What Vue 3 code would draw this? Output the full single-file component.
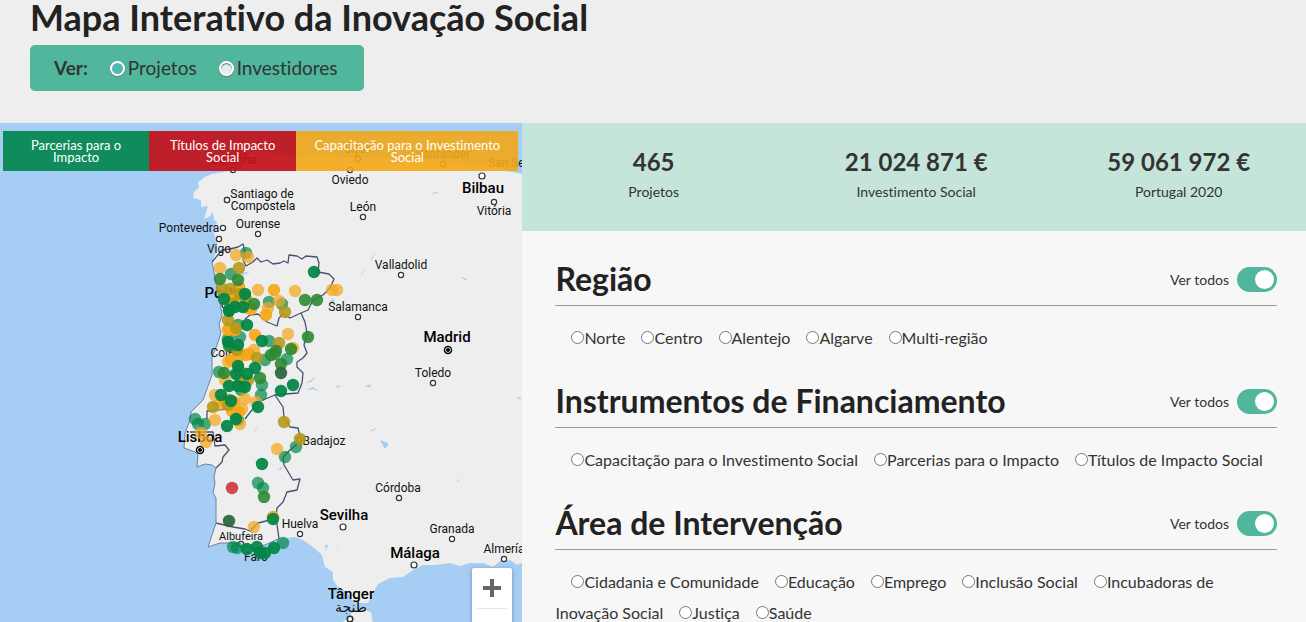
<script setup>
import { ref } from 'vue'

const view = ref('projetos')

const legend = [
  { label: 'Parcerias para o Impacto', tone: 'green' },
  { label: 'Títulos de Impacto Social', tone: 'red' },
  { label: 'Capacitação para o Investimento Social', tone: 'amber' },
]

const stats = [
  { value: '465', label: 'Projetos' },
  { value: '21\u00a0024\u00a0871\u00a0€', label: 'Investimento Social' },
  { value: '59\u00a0061\u00a0972\u00a0€', label: 'Portugal 2020' },
]

const filters = ref([
  { id: 'regiao', title: 'Região', all: true, options: ['Norte', 'Centro', 'Alentejo', 'Algarve', 'Multi-região'] },
  {
    id: 'instrumentos',
    title: 'Instrumentos de Financiamento',
    all: true,
    options: ['Capacitação para o Investimento Social', 'Parcerias para o Impacto', 'Títulos de Impacto Social'],
  },
  {
    id: 'area',
    title: 'Área de Intervenção',
    all: true,
    options: ['Cidadania e Comunidade', 'Educação', 'Emprego', 'Inclusão Social', 'Incubadoras de Inovação Social', 'Justiça', 'Saúde'],
  },
])

// [name, text x, text baseline, ring x, ring y, size class]
const places = [
  ['Corunha', 234, 164, 233, 170, ''],
  ['Gijón', 358, 153, 358, 159, ''],
  ['Santander', 443, 158, 443, 164, ''],
  ['San Sebastián', 526, 167, 560, 170, ''],
  ['Oviedo', 350, 184, 350, 170, ''],
  ['Bilbau', 483, 193, 482, 176, 'city'],
  ['Vitória', 494, 215, 494, 202, ''],
  ['León', 363, 211, 363, 217, ''],
  ['Santiago de', 262, 198, 227, 200, ''],
  ['Compostela', 263, 210, 227, 200, ''],
  ['Pontevedra', 189, 232, 223, 228, ''],
  ['Ourense', 258, 228, 258, 234, ''],
  ['Vigo', 219, 253, 219, 239, ''],
  ['Valladolid', 401, 269, 401, 275, ''],
  ['Salamanca', 358, 311, 358, 317, ''],
  ['Toledo', 433, 377, 433, 383, ''],
  ['Badajoz', 324, 445, 299, 440, ''],
  ['Coimbra', 233, 357, 232, 350, ''],
  ['Córdoba', 398, 492, 399, 498, ''],
  ['Sevilha', 344, 520, 343, 527, 'city'],
  ['Huelva', 300, 528, 300, 534, ''],
  ['Granada', 452, 533, 452, 539, ''],
  ['Málaga', 415, 558, 414, 565, 'city'],
  ['Almería', 504, 553, 504, 559, ''],
  ['Albufeira', 241, 540, 241, 544, 'small'],
  ['Faro', 256, 561, 257, 550, ''],
  ['Tânger', 351, 599, 350, 619, 'city'],
  ['طنجة', 351, 612, 350, 619, 'arabic'],
  ['Porto', 223, 298, 225, 305, 'city'],
]

const markers = {
  t: [[246,253],[231,274],[269,302],[282,304],[240,337],[228,339],[269,341],[265,360],[275,354],[287,359],[219,372],[262,385],[261,395],[241,390],[195,419],[198,424],[205,424],[296,447],[285,457],[258,483],[263,488],[233,547],[237,548],[283,543],[238,325],[238,420]],
  y: [[236,255],[248,257],[220,268],[258,290],[295,291],[279,301],[332,290],[337,290],[288,334],[254,350],[228,362],[225,380],[215,395],[219,405],[245,399],[256,402],[215,420],[240,424],[277,449],[254,527],[229,329],[242,409],[268,308],[293,348],[201,433],[206,442]],
  o: [[239,287],[226,295],[235,297],[243,295],[251,309],[274,290],[266,315],[248,308],[235,330],[228,330],[255,335],[249,354],[231,360],[238,358],[246,355],[224,401],[234,402],[232,411],[239,412],[273,517]],
  l: [[239,268],[222,289],[230,289],[240,294],[285,312],[228,320],[279,343],[257,358],[239,370],[248,380],[213,407],[228,405],[284,422],[300,439],[237,350],[240,379],[230,400],[246,299],[233,304],[236,328]],
  m: [[220,279],[238,280],[254,304],[305,300],[317,300],[308,337],[276,351],[271,355],[281,364],[260,378],[224,373],[264,497],[229,346],[291,349]],
  g: [[314,272],[224,299],[243,307],[235,307],[229,310],[245,294],[229,311],[247,325],[228,342],[238,345],[262,341],[238,366],[255,368],[236,374],[247,374],[229,386],[238,386],[245,387],[221,395],[293,385],[281,391],[258,407],[231,401],[227,426],[236,419],[262,464],[273,519],[247,549],[257,547],[260,553],[265,553],[274,548]],
  d: [[281,373],[229,521]],
  r: [[232,488]],
}

const zoomIn = () => {}
</script>

<template>
  <main class="page">
    <header class="top">
      <h1>Mapa Interativo da Inovação Social</h1>
      <fieldset class="switcher" aria-label="Ver">
        <strong>Ver:</strong>
        <label><input v-model="view" type="radio" name="view" value="projetos" />Projetos</label>
        <label><input v-model="view" type="radio" name="view" value="investidores" />Investidores</label>
      </fieldset>
    </header>

    <div class="body">
      <section class="map" aria-label="Mapa">
        <svg class="chart" role="img" aria-label="Projetos em Portugal">
          <g transform="translate(0 -123)">
            <path class="land" d="M212 174 205 177 198 182 199 187 194 192 193 198 201 200 201 207 208 206 204 219 209 217 213 212 214 220 217 222 214 233 217 242 216 252 212 262 214 272 217 288 220 302 222 315 219 325 221 333 217 345 212 357 212 375 203 400 191 412 190 420 185 433 184 448 195 452 198 455 197 467 205 464 212 465 216 468 214 477 215 483 213 493 216 498 216 523 212 535 208 547 220 543 233 543 242 544 255 548 265 545 278 539 295 537 303 540 313 547 322 555 325 567 333 572 333 580 338 587 347 592 352 600 360 603 368 603 373 593 378 584 390 578 403 577 413 570 423 565 436 565 450 563 460 566 470 563 483 563 493 567 500 561 510 560 517 565 530 560 700 560V174L522 174 507 171 495 163 470 166 440 160 400 160 370 157 340 158 320 153 300 158 280 154 255 151 242 157 242 169 230 171Z" />
            <path class="land" d="M343 622 352 613 360 609 371 612 374 630 343 650Z" />
            <path class="lake" d="M430 194 436 192 439 193 432 194ZM370 260 377 251 372 259ZM360 276 366 268 364 272ZM460 277 468 279 465 280ZM329 303 333 298 335 303ZM306 383 316 377 311 382ZM306 390 313 387 319 391 313 389ZM335 387 341 385 338 388ZM364 387 371 384 370 387ZM370 431 377 427 373 431ZM380 440 386 442 389 444 385 449ZM517 398 520 397 521 400ZM457 481 460 478 458 482ZM325 545 328 545 326 551ZM336 551 339 545 337 550ZM253 433 258 426 256 430ZM302 427 305 419 303 425ZM278 470 283 466 281 470ZM240 273 250 272 243 275Z" />
            <path class="border" d="M212 262 222 250 230 249 238 247 243 244 245 252 243 260 246 266 253 262 257 258 261 262 267 260 273 264 280 263 284 261 288 263 289 255 297 256 302 259 306 256 317 257 319 263 318 272 329 274 334 279 330 288 323 295 313 300 308 310 301 313 305 322 307 333 304 345 307 353 303 358 297 362 297 367 303 373 302 383 298 393 285 394 275 395 283 407 284 417 290 427 298 428 300 436 298 443 290 450 283 457 284 465 293 480 300 479 297 490 287 492 283 502 277 508 276 517 279 539" />
            <path class="border" d="M245 319 250 315 258 314 267 322 277 326 279 318 283 314 290 318 301 313M275 395 258 402 245 419M207 419 207 411 227 409M190 432 213 432 215 446 225 445 229 450 223 457 222 462 216 468M216 523 233 527 245 529 250 531 258 523 270 520 276 513" />
            <path class="coast" d="M212 262 214 272 217 288 220 302 222 315 219 325 221 333 217 345 212 357 212 375 203 400 191 412 190 420 185 433 184 448 195 452 198 455 197 467 205 464 212 465 216 468 214 477 215 483 213 493 216 498 216 523 212 535 208 547 220 543 233 543 242 544 255 548 265 545 278 539" />

            <g v-for="p in places" :key="p[0]">
              <circle class="ring" :cx="p[3]" :cy="p[4]" :r="p[5] === 'city' ? 3 : 2.6" />
              <text :class="['place', p[5]]" :x="p[1]" :y="p[2]">{{ p[0] }}</text>
            </g>
            <text class="place city" x="447" y="342">Madrid</text>
            <text class="place city" x="200" y="442">Lisboa</text>
            <g v-for="c in [[448, 350], [200, 450]]" :key="c[0]">
              <circle class="ring capital" :cx="c[0]" :cy="c[1]" r="3.5" />
              <circle class="core" :cx="c[0]" :cy="c[1]" r="2" />
            </g>

            <g v-for="(list, tone) in markers" :key="tone" :class="['dots', tone]">
              <circle v-for="(m, i) in list" :key="i" :cx="m[0]" :cy="m[1]" r="6.2" />
            </g>
          </g>
        </svg>

        <ul class="legend">
          <li v-for="l in legend" :key="l.tone" :class="l.tone">{{ l.label }}</li>
        </ul>

        <div class="zoom">
          <button type="button" aria-label="Aumentar zoom" @click="zoomIn">
            <svg width="18" height="18" viewBox="0 0 18 18" aria-hidden="true"><path d="M7 0h4v7h7v4h-7v7H7v-7H0V7h7z" /></svg>
          </button>
        </div>
      </section>

      <section class="panel">
        <dl class="stats">
          <div v-for="s in stats" :key="s.label">
            <dt>{{ s.label }}</dt>
            <dd>{{ s.value }}</dd>
          </div>
        </dl>

        <form class="filters">
          <section v-for="f in filters" :key="f.id" class="filter">
            <div class="head">
              <h2>{{ f.title }}</h2>
              <label class="toggle">Ver todos<input v-model="f.all" type="checkbox" /></label>
            </div>
            <div class="options">
              <template v-for="o in f.options" :key="o"><label><input type="radio" :name="f.id" :value="o" />{{ o }}</label><wbr /></template>
            </div>
          </section>
        </form>
      </section>
    </div>
  </main>
</template>

<style>
body {
  margin: 0;
  background: #eee;
}
</style>

<style scoped>
.page {
  display: flex;
  flex-direction: column;
  height: 100vh;
  overflow: hidden;
  font-family: Lato, "Liberation Sans", sans-serif;
  font-variant-ligatures: none;
  color: #333;
}
.top {
  flex: none;
  padding: 0 30px 32px;
}
h1 {
  margin: 0 0 11px;
  font-size: 36px;
  line-height: 34px;
  font-weight: 700;
  color: #222;
}
.switcher {
  display: inline-flex;
  align-items: center;
  box-sizing: border-box;
  gap: 22px;
  height: 46px;
  margin: 0;
  padding: 0 26px 0 24px;
  border: 0;
  border-radius: 5px;
  background: #50b69c;
  font-size: 19px;
  line-height: 22px;
  vertical-align: top;
}
.switcher strong { font-size: 19px; }
.switcher label {
  display: inline-flex;
  align-items: center;
  gap: 3px;
}
.switcher input {
  appearance: none;
  box-sizing: border-box;
  width: 15px;
  height: 15px;
  margin: 0;
  border: 2px solid #fff;
  border-radius: 50%;
  background: #dcefec;
  box-shadow: inset 0 1px 1px #555, 0 1px 1px #777;
}
.switcher input:checked {
  background: #54b8b2;
  box-shadow: 0 1px 1px #777;
}
.body {
  flex: 1;
  display: grid;
  grid-template-columns: 2fr 3fr;
  min-height: 0;
}
.map {
  position: relative;
  overflow: hidden;
  background: #a6cdf3;
}
.chart {
  display: block;
  width: 100%;
  height: 100%;
}
.land { fill: #eee; }
.lake { fill: #a6cdf3; }
.border, .coast {
  fill: none;
  stroke: #46526f;
  stroke-width: 1.3;
  stroke-linejoin: round;
}
.coast {
  stroke: #71809f;
  stroke-width: 1;
}
.ring {
  fill: #fff;
  stroke: #333;
  stroke-width: 1.2;
}
.ring.capital {
  stroke: #000;
  stroke-width: 1.5;
}
.core { fill: #000; }
.place {
  font: 400 12px Roboto, "Noto Sans", "DejaVu Sans", sans-serif;
  text-anchor: middle;
  fill: #111;
}
.place.city {
  font-size: 15px;
  font-weight: 500;
  fill: #000;
}
.place.small { font-size: 11px; }
.place.arabic { font-size: 14px; }
.dots.t { fill: rgba(0, 135, 72, 0.7); }
.dots.y { fill: rgba(245, 168, 30, 0.72); }
.dots.l { fill: rgba(182, 153, 24, 0.9); }
.dots.m { fill: rgba(45, 136, 50, 0.9); }
.dots.o { fill: rgba(246, 168, 26, 0.93); }
.dots.g { fill: rgba(0, 133, 70, 0.93); }
.dots.d { fill: rgba(40, 100, 58, 0.92); }
.dots.r { fill: rgba(200, 30, 40, 0.8); }
.legend {
  position: absolute;
  top: 8px;
  left: 3px;
  right: 4px;
  display: grid;
  grid-template-columns: 146fr 147fr 222fr;
  margin: 0;
  padding: 0;
  list-style: none;
}
.legend li {
  display: flex;
  align-items: center;
  justify-content: center;
  height: 40px;
  padding: 0 16px;
  color: #fff;
  font-size: 13px;
  line-height: 12px;
  text-align: center;
}
.legend .green { background: rgba(0, 132, 75, 0.9); }
.legend .red { background: rgba(193, 16, 24, 0.92); }
.legend .amber { background: rgba(243, 167, 22, 0.9); }
.zoom {
  position: absolute;
  right: 10px;
  bottom: -27px;
  height: 81px;
  width: 40px;
  border-radius: 2px;
  background: #fff;
  box-shadow: 0 1px 4px rgba(0, 0, 0, 0.3);
}
.zoom button {
  display: flex;
  align-items: center;
  justify-content: center;
  width: 30px;
  height: 41px;
  margin: 0 5px;
  padding: 0;
  border: 0;
  border-bottom: 1px solid #e6e6e6;
  background: none;
}
.zoom path { fill: #666; }
.panel {
  min-width: 0;
  overflow: hidden;
  background: #f7f7f7;
}
.stats {
  display: grid;
  grid-template-columns: repeat(3, 1fr);
  box-sizing: border-box;
  height: 108px;
  margin: 0 -4px 0 0;
  padding-top: 24px;
  background: #c5e4da;
  text-align: center;
}
.stats div {
  display: flex;
  flex-direction: column-reverse;
  justify-content: flex-end;
}
.stats dt {
  font-size: 14px;
  line-height: 30px;
}
.stats dd {
  margin: 0;
  font-size: 24px;
  line-height: 30px;
  font-weight: 700;
}
.filters { padding: 0 29px 0 33px; }
.filter { padding-top: 24px; }
.head {
  display: flex;
  align-items: center;
  justify-content: space-between;
  height: 48px;
  padding-bottom: 2px;
  border-bottom: 1px solid #999;
}
h2 {
  margin: 0;
  font-size: 32px;
  line-height: 40px;
  font-weight: 700;
  color: #222;
}
.toggle {
  display: flex;
  align-items: center;
  gap: 8px;
  font-size: 14px;
}
.toggle input {
  appearance: none;
  box-sizing: border-box;
  width: 40px;
  height: 25px;
  margin: 0;
  padding: 3px;
  border-radius: 13px;
  background: #ccc;
}
.toggle input::before {
  content: "";
  display: block;
  width: 19px;
  height: 19px;
  border-radius: 50%;
  background: #fff;
}
.toggle input:checked { background: #50b69c; }
.toggle input:checked::before { margin-left: auto; }
.options {
  padding: 16px 10px 0 0;
  font-size: 16px;
  line-height: 31px;
}
.options input {
  width: 13px;
  height: 13px;
  margin: 0 0 0 16px;
}
</style>
